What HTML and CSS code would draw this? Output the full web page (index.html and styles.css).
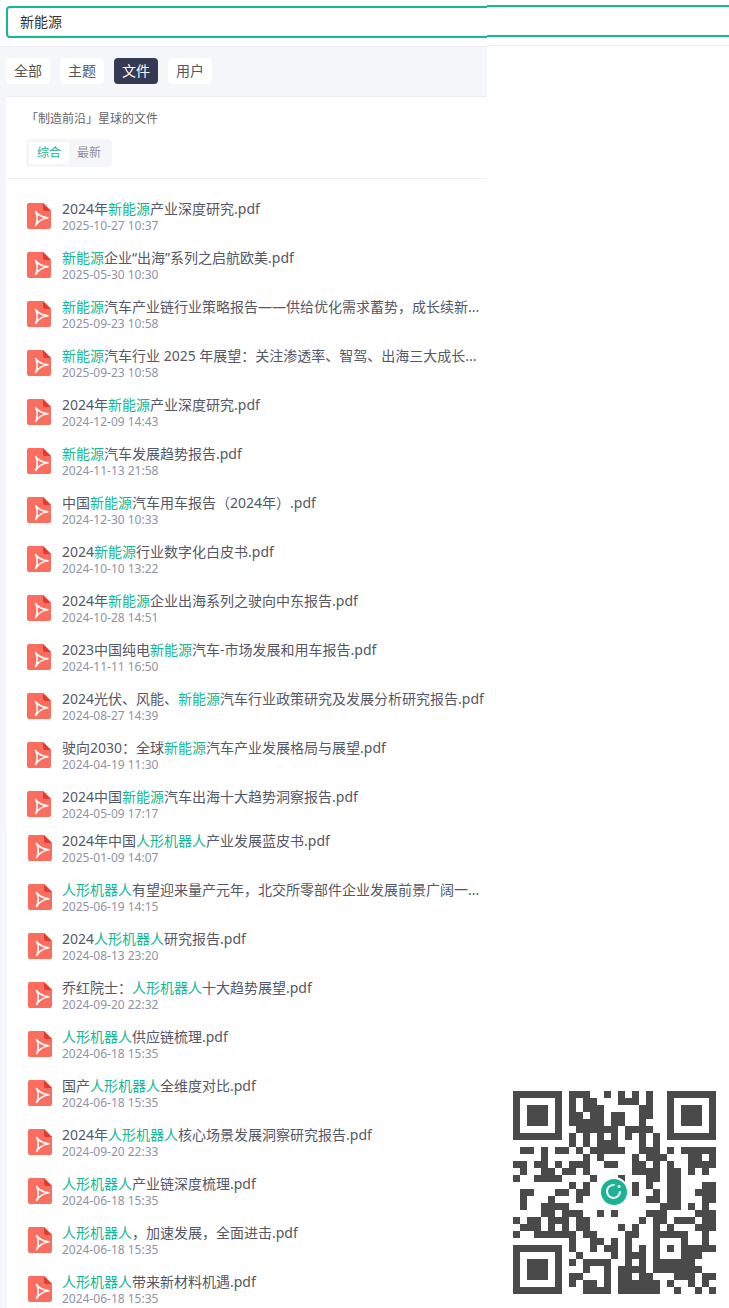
FILE: index.html
```html
<!DOCTYPE html>
<html lang="zh-CN">
<head>
    <meta charset="utf-8">
    <title>搜索</title>
    <link rel="stylesheet" href="styles.css">
</head>
<body>
<svg class="defs" width="0" height="0">
    <symbol id="pdf" viewBox="0 0 24 26">
        <path d="M2 0H16L24 8V24a2 2 0 0 1-2 2H2a2 2 0 0 1-2-2V2a2 2 0 0 1 2-2z" fill="#fb6d5e"/>
        <path d="M16 0l8 8h-6a2 2 0 0 1-2-2z" fill="#e8392e"/>
        <path d="M8.500 8.500Q12.500 14 21 14.800Q13 15.800 8.500 22.500Q12 15.500 8.500 8.500z" fill="none" stroke="#fff" stroke-width="1.500" stroke-linejoin="round"/>
    </symbol>
</svg>
<div class="page">
    <div class="left">
        <div class="search-bar">
            <div class="search-input">新能源</div>
        </div>
        <div class="tabs">
            <span class="tab">全部</span>
            <span class="tab">主题</span>
            <span class="tab active">文件</span>
            <span class="tab">用户</span>
        </div>
        <div class="card">
            <div class="card-head">
                <div class="card-title">「制造前沿」星球的文件</div>
                <div class="sort">
                    <span class="sort-item active">综合</span>
                    <span class="sort-item">最新</span>
                </div>
            </div>
            <div class="files">
                <div class="file"><svg class="file-icon"><use href="#pdf"/></svg><div class="file-text"><div class="file-name">2024年<em>新能源</em>产业深度研究.pdf</div><div class="file-date">2025-10-27 10:37</div></div></div>
                <div class="file"><svg class="file-icon"><use href="#pdf"/></svg><div class="file-text"><div class="file-name"><em>新能源</em>企业“出海”系列之启航欧美.pdf</div><div class="file-date">2025-05-30 10:30</div></div></div>
                <div class="file"><svg class="file-icon"><use href="#pdf"/></svg><div class="file-text"><div class="file-name"><em>新能源</em>汽车产业链行业策略报告——供给优化需求蓄势，成长续新...</div><div class="file-date">2025-09-23 10:58</div></div></div>
                <div class="file"><svg class="file-icon"><use href="#pdf"/></svg><div class="file-text"><div class="file-name"><em>新能源</em>汽车行业 2025 年展望：关注渗透率、智驾、出海三大成长...</div><div class="file-date">2025-09-23 10:58</div></div></div>
                <div class="file"><svg class="file-icon"><use href="#pdf"/></svg><div class="file-text"><div class="file-name">2024年<em>新能源</em>产业深度研究.pdf</div><div class="file-date">2024-12-09 14:43</div></div></div>
                <div class="file"><svg class="file-icon"><use href="#pdf"/></svg><div class="file-text"><div class="file-name"><em>新能源</em>汽车发展趋势报告.pdf</div><div class="file-date">2024-11-13 21:58</div></div></div>
                <div class="file"><svg class="file-icon"><use href="#pdf"/></svg><div class="file-text"><div class="file-name">中国<em>新能源</em>汽车用车报告（2024年）.pdf</div><div class="file-date">2024-12-30 10:33</div></div></div>
                <div class="file"><svg class="file-icon"><use href="#pdf"/></svg><div class="file-text"><div class="file-name">2024<em>新能源</em>行业数字化白皮书.pdf</div><div class="file-date">2024-10-10 13:22</div></div></div>
                <div class="file"><svg class="file-icon"><use href="#pdf"/></svg><div class="file-text"><div class="file-name">2024年<em>新能源</em>企业出海系列之驶向中东报告.pdf</div><div class="file-date">2024-10-28 14:51</div></div></div>
                <div class="file"><svg class="file-icon"><use href="#pdf"/></svg><div class="file-text"><div class="file-name">2023中国纯电<em>新能源</em>汽车-市场发展和用车报告.pdf</div><div class="file-date">2024-11-11 16:50</div></div></div>
                <div class="file"><svg class="file-icon"><use href="#pdf"/></svg><div class="file-text"><div class="file-name">2024光伏、风能、<em>新能源</em>汽车行业政策研究及发展分析研究报告.pdf</div><div class="file-date">2024-08-27 14:39</div></div></div>
                <div class="file"><svg class="file-icon"><use href="#pdf"/></svg><div class="file-text"><div class="file-name">驶向2030：全球<em>新能源</em>汽车产业发展格局与展望.pdf</div><div class="file-date">2024-04-19 11:30</div></div></div>
                <div class="file"><svg class="file-icon"><use href="#pdf"/></svg><div class="file-text"><div class="file-name">2024中国<em>新能源</em>汽车出海十大趋势洞察报告.pdf</div><div class="file-date">2024-05-09 17:17</div></div></div>
            </div>
        </div>
        <div class="files files-more">
            <div class="file"><svg class="file-icon"><use href="#pdf"/></svg><div class="file-text"><div class="file-name">2024年中国<em>人形机器人</em>产业发展蓝皮书.pdf</div><div class="file-date">2025-01-09 14:07</div></div></div>
            <div class="file"><svg class="file-icon"><use href="#pdf"/></svg><div class="file-text"><div class="file-name"><em>人形机器人</em>有望迎来量产元年，北交所零部件企业发展前景广阔一...</div><div class="file-date">2025-06-19 14:15</div></div></div>
            <div class="file"><svg class="file-icon"><use href="#pdf"/></svg><div class="file-text"><div class="file-name">2024<em>人形机器人</em>研究报告.pdf</div><div class="file-date">2024-08-13 23:20</div></div></div>
            <div class="file"><svg class="file-icon"><use href="#pdf"/></svg><div class="file-text"><div class="file-name">乔红院士：<em>人形机器人</em>十大趋势展望.pdf</div><div class="file-date">2024-09-20 22:32</div></div></div>
            <div class="file"><svg class="file-icon"><use href="#pdf"/></svg><div class="file-text"><div class="file-name"><em>人形机器人</em>供应链梳理.pdf</div><div class="file-date">2024-06-18 15:35</div></div></div>
            <div class="file"><svg class="file-icon"><use href="#pdf"/></svg><div class="file-text"><div class="file-name">国产<em>人形机器人</em>全维度对比.pdf</div><div class="file-date">2024-06-18 15:35</div></div></div>
            <div class="file"><svg class="file-icon"><use href="#pdf"/></svg><div class="file-text"><div class="file-name">2024年<em>人形机器人</em>核心场景发展洞察研究报告.pdf</div><div class="file-date">2024-09-20 22:33</div></div></div>
            <div class="file"><svg class="file-icon"><use href="#pdf"/></svg><div class="file-text"><div class="file-name"><em>人形机器人</em>产业链深度梳理.pdf</div><div class="file-date">2024-06-18 15:35</div></div></div>
            <div class="file"><svg class="file-icon"><use href="#pdf"/></svg><div class="file-text"><div class="file-name"><em>人形机器人</em>，加速发展，全面进击.pdf</div><div class="file-date">2024-06-18 15:35</div></div></div>
            <div class="file"><svg class="file-icon"><use href="#pdf"/></svg><div class="file-text"><div class="file-name"><em>人形机器人</em>带来新材料机遇.pdf</div><div class="file-date">2024-06-18 15:35</div></div></div>
        </div>
    </div>
    <div class="right">
        <div class="right-bar"><div class="right-input"></div></div>
        <div class="qr">
            <svg class="qr-code" viewBox="0 0 29 29">
                <path fill-rule="evenodd" d="M0 0h7v7h-7zM1 1v5h5v-5zM2 2h3v3h-3zM22 0h7v7h-7zM23 1v5h5v-5zM24 2h3v3h-3zM0 22h7v7h-7zM1 23v5h5v-5zM2 24h3v3h-3z"/>
                <path class="qr-data" d="M8 .5h3m2 0h1m1 0h1m1 0h1m1 0h1
                    M8 1.500h1m1 0h2m3 0h3m1 0h1
                    M8 2.500h1m1 0h3m5 0h2
                    M8 3.500h2m1 0h2m1 0h2m2 0h2
                    M8 4.500h5m1 0h2m2 0h1
                    M9 5.500h6m1 0h4
                    M8 6.500h1m1 0h1m1 0h1m1 0h1m1 0h1m1 0h1m1 0h1
                    M8 7.500h1m1 0h1m1 0h3m3 0h1m1 0h1
                    M1 8.500h2m1 0h1m1 0h2m1 0h1m1 0h5m2 0h3m1 0h1m1 0h5
                    M4 9.500h1m5 0h1m1 0h1m4 0h1m1 0h3m3 0h2m1 0h1
                    M0 10.500h2m1 0h2m1 0h1m1 0h3m2 0h2m2 0h2m1 0h1m1 0h1m2 0h4
                    M1 11.500h1m2 0h2m1 0h2m1 0h1m6 0h4m1 0h2m1 0h1m1 0h1
                    M0 12.500h1m2 0h4m4 0h1m3 0h1m3 0h2m1 0h2
                    M8 13.500h1m1 0h1m6 0h1m1 0h1m2 0h2m3 0h2
                    M1 14.500h2m3 0h2m1 0h2m6 0h1m2 0h1m1 0h2m2 0h3
                    M1 15.500h1m3 0h1m3 0h1m9 0h2m1 0h2m3 0h2
                    M1 16.500h1m2 0h4m13 0h3m1 0h1m1 0h1
                    M4 17.500h2m1 0h3m2 0h1m1 0h1m4 0h3m4 0h3
                    M0 18.500h1m1 0h2m1 0h3m1 0h2m7 0h1m1 0h2m1 0h3m1 0h2
                    M1 19.500h3m1 0h1m1 0h1m1 0h2m4 0h1m1 0h1m2 0h1m1 0h1m3 0h3
                    M0 20.500h1m2 0h6m1 0h2m4 0h2m2 0h5m2 0h1
                    M8 21.500h1m2 0h2m1 0h1m1 0h1m3 0h1m3 0h1m2 0h1
                    M8 22.500h1m2 0h1m1 0h2m1 0h1m1 0h1m1 0h1m1 0h1m1 0h5
                    M9 23.500h1m4 0h1m1 0h3m1 0h1m3 0h3
                    M8 24.500h1m1 0h4m2 0h1m1 0h1m1 0h6
                    M10 25.500h1m2 0h1m1 0h4m1 0h7
                    M8 26.500h2m3 0h1m1 0h2m1 0h2m3 0h3m1 0h2
                    M8 27.500h1m1 0h2m1 0h1m1 0h6m1 0h1m2 0h1m1 0h1
                    M10 28.500h4m1 0h6m2 0h1m2 0h1m1 0h1"/>
            </svg>
            <svg class="qr-logo" viewBox="0 0 30 30">
                <circle cx="15" cy="15" r="15" fill="#fff"/>
                <circle cx="15" cy="15" r="13" fill="#1ab394"/>
                <path d="M21 14A6.500 6.500 0 1 1 15.500 8" fill="none" stroke="#fff" stroke-width="2"/>
                <circle cx="20" cy="9.500" r="1.500" fill="#fff"/>
            </svg>
        </div>
    </div>
</div>
</body>
</html>
```
FILE: styles.css
```css
html, body {
    margin: 0;
    padding: 0;
    background: #fff;
}

body {
    font-family: "Noto Sans", "Noto Sans CJK SC", sans-serif;
    color: #555867;
}

.defs {
    display: block;
    height: 0;
}

.page {
    display: flex;
    height: 1308px;
    overflow: hidden;
}

.left {
    width: 487px;
    flex: none;
    background: #f5f6fa;
    overflow: hidden;
}

.search-bar {
    height: 47px;
    box-sizing: border-box;
    padding: 6px 0 0 6px;
    background: #fff;
    border-bottom: 1px solid #eceef2;
}

.search-input {
    width: 520px;
    height: 32px;
    box-sizing: border-box;
    border: 2px solid #14b892;
    border-radius: 4px;
    padding-left: 12px;
    font-size: 14px;
    line-height: 28px;
    color: #333;
}

.tabs {
    display: flex;
    gap: 10px;
    padding: 11px 0 12px 6px;
}

.tab {
    width: 44px;
    height: 26px;
    border-radius: 4px;
    background: #fff;
    text-align: center;
    font-size: 14px;
    line-height: 26px;
    color: #555;
}

.tab.active {
    background: #353a54;
    color: #fff;
}

.card {
    margin-left: 6px;
    background: #fff;
    border-top: 1px solid #eceef2;
}

.card-head {
    height: 82px;
    box-sizing: border-box;
    padding: 13px 0 0 20px;
    border-bottom: 1px solid #eff0f4;
}

.card-title {
    font-size: 12px;
    line-height: 18px;
    color: #666;
}

.sort {
    display: inline-flex;
    margin-top: 11px;
    padding: 3px;
    border-radius: 4px;
    background: #f5f6fa;
}

.sort-item {
    width: 40px;
    height: 22px;
    text-align: center;
    font-size: 12px;
    line-height: 22px;
    color: #8c8fa0;
}

.sort-item.active {
    background: #fff;
    color: #14b892;
}

.files {
    padding: 12px 0 0 21px;
}

.files-more {
    margin: -5px 0 0 7px;
    padding: 0 0 0 21px;
    background: #fff;
}

.file {
    display: flex;
    align-items: center;
    gap: 11px;
    height: 49px;
}

.file-icon {
    flex: none;
    width: 24px;
    height: 26px;
}

.files-more .file {
    gap: 10px;
}

.file-text {
    flex: 1;
    min-width: 0;
}

.file-name {
    font-size: 14px;
    line-height: 19px;
    white-space: nowrap;
}

.file-name em {
    font-style: normal;
    color: #14b892;
}

.file-date {
    font-size: 12px;
    line-height: 15px;
    color: #8f93a3;
}

.right {
    flex: 1;
    display: flex;
    flex-direction: column;
    min-width: 0;
    overflow: hidden;
}

.right-bar {
    height: 46px;
    box-sizing: border-box;
    padding-top: 5px;
    border-bottom: 1px solid #eceef2;
}

.right-input {
    height: 32px;
    box-sizing: border-box;
    border-top: 2px solid #14b892;
    border-bottom: 2px solid #14b892;
}

.qr {
    position: relative;
    width: 203px;
    height: 203px;
    margin: auto 0 14px 26px;
}

.qr-code {
    display: block;
    width: 203px;
    height: 203px;
    fill: #4a4a4a;
    shape-rendering: crispEdges;
}

.qr-data {
    fill: none;
    stroke: #4a4a4a;
    stroke-width: 1;
}

.qr-logo {
    position: absolute;
    left: 86px;
    top: 86px;
    width: 30px;
    height: 30px;
}
```
